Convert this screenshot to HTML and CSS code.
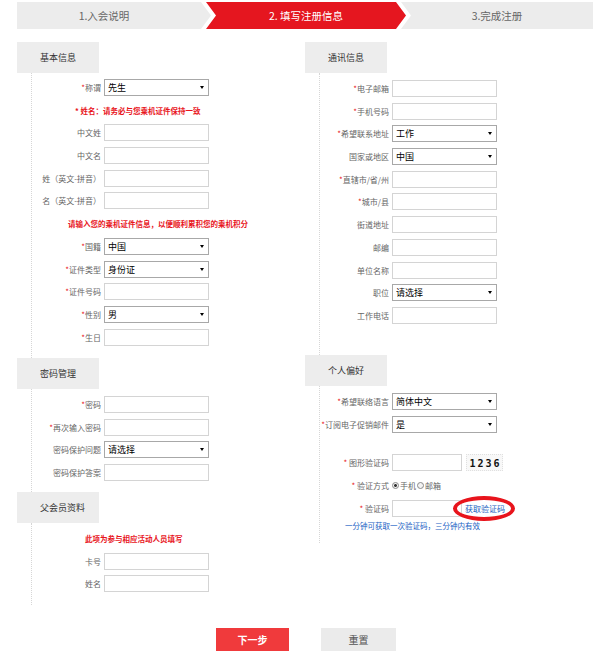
FILE: index.html
```html
<!DOCTYPE html>
<html>
<head>
    <meta charset="utf-8">
    <title>会员注册</title>
    <link rel="stylesheet" href="styles.css">
</head>
<body>
    <!-- 注册步骤 -->
    <div class="steps">
        <div class="step step-first">1.入会说明</div>
        <div class="step step-current">2. 填写注册信息</div>
        <div class="step step-last">3.完成注册</div>
    </div>

    <div class="form-cols">
        <!-- 左栏 -->
        <div class="col">
            <div class="sec-title">基本信息</div>
            <div class="sec-body body-basic">
                <div class="row">
                    <label><em>*</em>称谓</label>
                    <span class="sel-wrap"><select><option>先生</option><option>女士</option></select></span>
                </div>
                <p class="tip tip-name">* 姓名：请务必与您乘机证件保持一致</p>
                <div class="row"><label>中文姓</label><input class="txt" type="text"></div>
                <div class="row"><label>中文名</label><input class="txt" type="text"></div>
                <div class="row"><label>姓（英文-拼音）</label><input class="txt" type="text"></div>
                <div class="row"><label>名（英文-拼音）</label><input class="txt" type="text"></div>
                <p class="tip tip-card">请输入您的乘机证件信息，以便顺利累积您的乘机积分</p>
                <div class="row">
                    <label><em>*</em>国籍</label>
                    <span class="sel-wrap"><select><option>中国</option></select></span>
                </div>
                <div class="row">
                    <label><em>*</em>证件类型</label>
                    <span class="sel-wrap"><select><option>身份证</option><option>护照</option></select></span>
                </div>
                <div class="row"><label><em>*</em>证件号码</label><input class="txt" type="text"></div>
                <div class="row">
                    <label><em>*</em>性别</label>
                    <span class="sel-wrap"><select><option>男</option><option>女</option></select></span>
                </div>
                <div class="row"><label><em>*</em>生日</label><input class="txt" type="text"></div>
            </div>

            <div class="sec-title">密码管理</div>
            <div class="sec-body body-pwd">
                <div class="row"><label><em>*</em>密码</label><input class="txt" type="password"></div>
                <div class="row"><label><em>*</em>再次输入密码</label><input class="txt" type="password"></div>
                <div class="row">
                    <label>密码保护问题</label>
                    <span class="sel-wrap"><select><option>请选择</option></select></span>
                </div>
                <div class="row"><label>密码保护答案</label><input class="txt" type="text"></div>
            </div>

            <div class="sec-title">父会员资料</div>
            <div class="sec-body body-parent">
                <p class="tip tip-parent">此项为参与相应活动人员填写</p>
                <div class="row"><label>卡号</label><input class="txt" type="text"></div>
                <div class="row"><label>姓名</label><input class="txt" type="text"></div>
            </div>
        </div>

        <!-- 右栏 -->
        <div class="col">
            <div class="sec-title">通讯信息</div>
            <div class="sec-body body-contact">
                <div class="row"><label><em>*</em>电子邮箱</label><input class="txt" type="text"></div>
                <div class="row"><label><em>*</em>手机号码</label><input class="txt" type="text"></div>
                <div class="row">
                    <label><em>*</em>希望联系地址</label>
                    <span class="sel-wrap"><select><option>工作</option><option>家庭</option></select></span>
                </div>
                <div class="row">
                    <label>国家或地区</label>
                    <span class="sel-wrap"><select><option>中国</option></select></span>
                </div>
                <div class="row"><label><em>*</em>直辖市/省/州</label><input class="txt" type="text"></div>
                <div class="row"><label><em>*</em>城市/县</label><input class="txt" type="text"></div>
                <div class="row"><label>街道地址</label><input class="txt" type="text"></div>
                <div class="row"><label>邮编</label><input class="txt" type="text"></div>
                <div class="row"><label>单位名称</label><input class="txt" type="text"></div>
                <div class="row">
                    <label>职位</label>
                    <span class="sel-wrap"><select><option>请选择</option></select></span>
                </div>
                <div class="row"><label>工作电话</label><input class="txt" type="text"></div>
            </div>

            <div class="sec-title">个人偏好</div>
            <div class="sec-body body-pref">
                <div class="row">
                    <label><em>*</em>希望联络语言</label>
                    <span class="sel-wrap"><select><option>简体中文</option><option>English</option></select></span>
                </div>
                <div class="row">
                    <label><em>*</em>订阅电子促销邮件</label>
                    <span class="sel-wrap"><select><option>是</option><option>否</option></select></span>
                </div>

                <div class="row row-code row-captcha">
                    <label><em>*</em> 图形验证码</label>
                    <input class="txt" type="text">
                    <span class="captcha">1236</span>
                </div>
                <div class="row row-code">
                    <label><em>*</em> 验证方式</label>
                    <span class="radios">
                        <input type="radio" name="way" checked>手机<input type="radio" name="way">邮箱
                    </span>
                </div>
                <div class="row row-code">
                    <label><em>*</em> 验证码</label>
                    <input class="txt" type="text">
                    <a class="get-code" href="#">获取验证码</a>
                </div>
                <p class="code-tip">一分钟可获取一次验证码，三分钟内有效</p>
            </div>
        </div>
    </div>

    <div class="actions">
        <button class="btn btn-next" type="button">下一步</button>
        <button class="btn btn-reset" type="reset">重置</button>
    </div>
</body>
</html>
```

FILE: styles.css
```css
body {
    margin: 0;
    font-family: "Noto Sans CJK SC", "Liberation Sans", sans-serif;
    font-size: 8px;
    color: #666;
    background: #fff;
}

/* 步骤条 */
.steps {
    display: flex;
    margin: 2px 0 0 17px;
}
.step {
    height: 27px;
    line-height: 27px;
    font-size: 10.5px;
    text-align: center;
    background: #ececec;
    color: #666;
    box-sizing: border-box;
}
.step-first {
    width: 194px;
    padding-right: 20px;
    clip-path: polygon(0 0, calc(100% - 10px) 0, 100% 50%, calc(100% - 10px) 100%, 0 100%);
}
.step-current {
    width: 200px;
    margin-left: -5px;
    background: #e5161f;
    color: #fff;
    clip-path: polygon(0 0, calc(100% - 10px) 0, 100% 50%, calc(100% - 10px) 100%, 0 100%, 10px 50%);
}
.step-last {
    width: 192px;
    margin-left: -5px;
    clip-path: polygon(0 0, 100% 0, 100% 100%, 0 100%, 10px 50%);
}

/* 两栏 */
.form-cols {
    display: grid;
    grid-template-columns: 288px 288px;
    margin: 13px 0 0 17px;
}
.sec-title {
    width: 82px;
    height: 31px;
    line-height: 31px;
    box-sizing: border-box;
    padding-left: 23px;
    background: #ededed;
    font-size: 9px;
    color: #333;
}
.sec-body {
    margin-left: 14px;
    border-left: 1px dotted #d6d6d6;
    padding-top: 6px;
}
.body-basic { padding-bottom: 6.7px; }
.body-pwd { padding-top: 7px; padding-bottom: 5.2px; }
.body-parent { padding-top: 7px; padding-bottom: 7px; }
.body-contact { padding-top: 7px; padding-bottom: 25.3px; }
.body-pref { padding-top: 7px; padding-bottom: 12px; }

/* 表单行 */
.row {
    display: grid;
    grid-template-columns: 69px 105px;
    column-gap: 3px;
    align-items: center;
    height: 17px;
    margin-bottom: 5.7px;
}
.row label {
    text-align: right;
    white-space: nowrap;
    line-height: 17px;
}
.row label em {
    color: #e8141c;
    font-style: normal;
}
.txt {
    width: 100%;
    height: 17px;
    box-sizing: border-box;
    border: 1px solid #d4d4d4;
    padding: 0 3px;
    font-size: 9px;
    margin: 0;
    outline: none;
}
.sel-wrap {
    position: relative;
    display: block;
    height: 17px;
}
.sel-wrap select {
    appearance: none;
    -webkit-appearance: none;
    display: block;
    width: 100%;
    height: 17px;
    margin: 0;
    border: 1px solid #a8a8a8;
    border-radius: 0;
    padding: 0 0 0 3px;
    background: #fff;
    font-family: inherit;
    font-size: 9px;
    color: #000;
    outline: none;
}
.sel-wrap::after {
    content: "";
    position: absolute;
    right: 5px;
    top: 7px;
    border-left: 2.5px solid transparent;
    border-right: 2.5px solid transparent;
    border-top: 3px solid #000;
    pointer-events: none;
}

/* 提示文字 */
.tip {
    margin: 0 0 5.7px;
    height: 17px;
    line-height: 17px;
    color: #e8141c;
    font-size: 7.5px;
    font-weight: bold;
    white-space: nowrap;
}
.tip-name { padding-left: 43px; }
.tip-card { padding-left: 36px; }
.tip-parent { padding-left: 53px; }

/* 验证码 */
.row-code {
    grid-template-columns: 69px 70px auto;
}
.row-captcha {
    margin-top: 21.6px;
}
.captcha {
    justify-self: start;
    margin-left: 1px;
    width: 37px;
    height: 17px;
    line-height: 17px;
    padding-left: 2px;
    text-align: center;
    background: #f8f8f8;
    border: 1px dotted #e0e0e0;
    box-sizing: border-box;
    font-family: "DejaVu Sans Mono", monospace;
    font-size: 10px;
    font-weight: bold;
    letter-spacing: 2px;
    color: #111;
}
.radios {
    grid-column: 2 / 4;
    display: flex;
    align-items: center;
    white-space: nowrap;
}
.radios input {
    appearance: none;
    -webkit-appearance: none;
    width: 7px;
    height: 7px;
    margin: 0 1px 0 0;
    border: 1px solid #8a8a8a;
    border-radius: 50%;
    background: #f2f2f2;
}
.radios input:checked {
    background: radial-gradient(circle, #333 0, #333 35%, #f2f2f2 45%);
}
.radios input:nth-of-type(2) {
    margin-left: 1px;
}
.get-code {
    position: relative;
    justify-self: start;
    color: #1a5fc0;
    text-decoration: none;
    white-space: nowrap;
}
.get-code::before {
    content: "";
    position: absolute;
    left: -12px;
    top: 50%;
    width: 62px;
    height: 25px;
    margin-top: -12.5px;
    box-sizing: border-box;
    border: 4px solid #e8141c;
    border-radius: 50%;
}
.code-tip {
    margin: -2px 0 0;
    padding-left: 25px;
    color: #1a62c4;
    font-size: 7.5px;
    line-height: 11px;
    white-space: nowrap;
}

/* 按钮 */
.actions {
    display: flex;
    justify-content: center;
    gap: 32px;
    padding-left: 12px;
    margin-top: 23px;
}
.btn {
    height: 23px;
    border: none;
    padding: 0;
    font-family: inherit;
    font-size: 10px;
    cursor: pointer;
}
.btn-next {
    width: 73px;
    background: #f03a3c;
    color: #fff;
    font-weight: bold;
}
.btn-reset {
    width: 75px;
    background: #ebebeb;
    color: #555;
}
```
